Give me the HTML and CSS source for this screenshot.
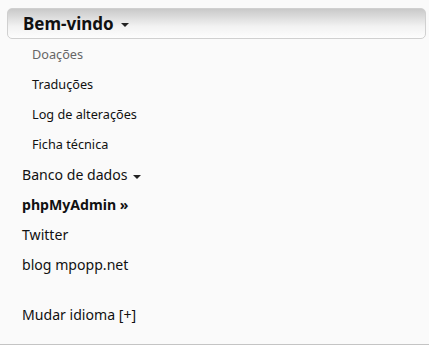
FILE: index.html
```html
<!DOCTYPE html>
<html lang="pt">
<head>
  <meta charset="UTF-8">
  <title>Menu</title>
  <link rel="stylesheet" href="styles.css">
</head>
<body>

<div class="side-menu">
  <div class="menu-head">Bem-vindo<span class="caret"></span></div>
  <ul class="sub-list">
    <li class="muted">Doações</li>
    <li>Traduções</li>
    <li>Log de alterações</li>
    <li>Ficha técnica</li>
  </ul>
  <ul class="main-list">
    <li>Banco de dados<span class="caret small"></span></li>
    <li class="strong">phpMyAdmin &raquo;</li>
    <li>Twitter</li>
    <li>blog mpopp.net</li>
    <li class="lang">Mudar idioma [+]</li>
  </ul>
</div>

</body>
</html>
```

FILE: styles.css
```css
* {
  box-sizing: border-box;
}

body {
  margin: 0;
  padding: 0;
  font-family: "Noto Sans", sans-serif;
  background: #fff;
  color: #111;
}

.side-menu {
  height: 345px;
  padding: 8px 3px 0 7px;
  background: #fafafa;
  border-bottom: 1px solid #c4c4c4;
}

.menu-head {
  height: 31px;
  padding-left: 15px;
  display: flex;
  align-items: center;
  font-size: 17px;
  font-weight: 700;
  border: 1px solid #d0d0d0;
  border-radius: 5px;
  background: linear-gradient(#c9c9c9, #f2f2f2 60%, #fdfdfd);
}

.caret {
  display: inline-block;
  margin-left: 7px;
  margin-top: 2px;
  border-top: 4px solid #222;
  border-left: 4px solid transparent;
  border-right: 4px solid transparent;
}

.caret.small {
  margin-left: 5px;
  vertical-align: middle;
}

ul {
  list-style: none;
  margin: 0;
  padding: 0;
}

.sub-list li {
  height: 30px;
  line-height: 30px;
  padding-left: 25px;
  font-size: 12.7px;
}

.sub-list li.muted {
  color: #666;
}

.main-list li {
  height: 30px;
  line-height: 31px;
  padding-left: 15px;
  font-size: 14.1px;
}

.main-list li.strong {
  font-weight: 700;
}

.main-list li.lang {
  margin-top: 20px;
}
```
